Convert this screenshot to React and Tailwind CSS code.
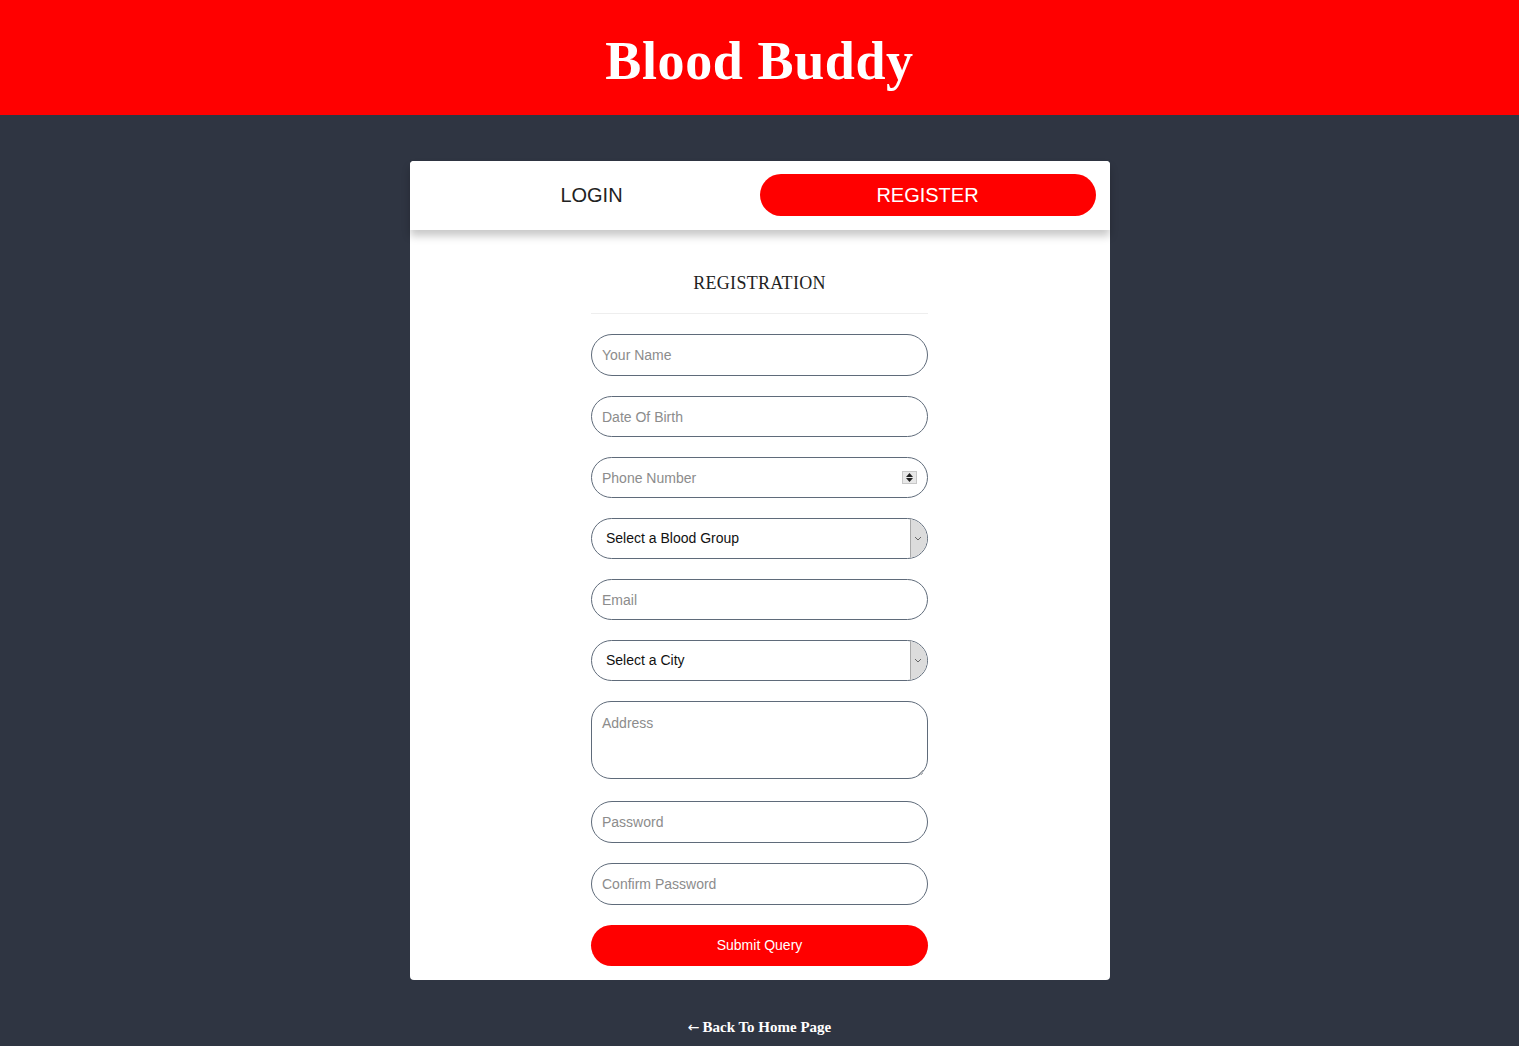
import React from "react";

const inputCls =
  "block w-full rounded-full border border-[#5f6b7a] bg-white px-[10px] text-[14px] text-[#333] placeholder:text-[#8c8c8c] outline-none";

function SelectBox({ label }) {
  return (
    <div className="flex h-[41px] w-full items-stretch overflow-hidden rounded-full border border-[#5f6b7a] bg-white">
      <div className="flex flex-1 items-center pl-[14px] text-[14px] text-[#111]">{label}</div>
      <div className="flex w-[17px] items-center justify-center border-l border-[#a9a9a9] bg-[#dcdcdc]">
        <svg width="8" height="5" viewBox="0 0 8 5" className="mr-[2px]">
          <path d="M1 1 L4 4 L7 1" fill="none" stroke="#666" strokeWidth="1" />
        </svg>
      </div>
    </div>
  );
}

export default function App() {
  return (
    <div
      className="min-h-[1046px] bg-[#2f3542]"
      style={{ fontFamily: '"Liberation Sans", Arial, sans-serif' }}
    >
      <header className="flex h-[115px] items-center justify-center bg-[#ff0000] pt-[6px]">
        <h1 className="font-['Liberation_Serif',serif] text-[54px] font-bold leading-none text-white tracking-[0.6px]">
          Blood Buddy
        </h1>
      </header>

      <main className="pt-[46px]">
        <div className="mx-auto w-[700px] rounded-[4px] bg-white">
          <div className="relative flex h-[69px] items-center rounded-t-[4px] bg-white pb-[2px] pr-[14px] shadow-[0_6px_8px_rgba(0,0,0,0.22)]">
            <div className="flex flex-1 items-center justify-center pl-[14px] text-[20px] text-[#222]">LOGIN</div>
            <div className="flex h-[42px] w-[336px] items-center justify-center rounded-full bg-[#ff0000] text-[20px] text-white">
              REGISTER
            </div>
          </div>

          <div className="mx-auto w-[337px] pb-[14px] pt-[40px]">
            <h2 className="text-center font-['Liberation_Serif',serif] text-[18px] leading-[26px] tracking-[0.3px] text-[#222]">
              REGISTRATION
            </h2>
            <div className="mt-[17px] h-px w-full bg-[#eeeeee]" />

            <div className="mt-[20px] flex flex-col gap-[20px]">
              <input className={`${inputCls} h-[42px]`} placeholder="Your Name" />
              <input className={`${inputCls} h-[41px]`} placeholder="Date Of Birth" />
              <div className="relative">
                <input className={`${inputCls} h-[41px]`} placeholder="Phone Number" />
                <div className="absolute right-[11px] top-[14px] flex h-[13px] w-[15px] flex-col items-center justify-center gap-[1px] border border-[#c8c8c8] bg-[#e8e8e8]">
                  <svg width="7" height="4" viewBox="0 0 7 4"><path d="M0 4 L3.5 0 L7 4 Z" fill="#222" /></svg>
                  <svg width="7" height="4" viewBox="0 0 7 4"><path d="M0 0 L3.5 4 L7 0 Z" fill="#222" /></svg>
                </div>
              </div>
              <SelectBox label="Select a Blood Group" />
              <input className={`${inputCls} h-[41px]`} placeholder="Email" />
              <SelectBox label="Select a City" />
              <div className="relative">
                <textarea
                  className="block h-[78px] w-full resize-none rounded-[20px] border border-[#5f6b7a] bg-white px-[10px] pt-[11px] text-[14px] text-[#333] placeholder:text-[#8c8c8c] outline-none"
                  placeholder="Address"
                />
                <svg className="absolute bottom-[3px] right-[4px]" width="7" height="7" viewBox="0 0 7 7">
                  <path d="M6 1 L1 6 M6 4 L4 6" stroke="#aaa" strokeWidth="1" />
                </svg>
              </div>
              <input className={`${inputCls} mt-[2px] h-[42px]`} placeholder="Password" />
              <input className={`${inputCls} h-[42px]`} placeholder="Confirm Password" />
              <button className="h-[41px] w-full rounded-full bg-[#ff0000] text-[14px] text-white">
                Submit Query
              </button>
            </div>
          </div>
        </div>

        <div className="flex h-[95px] items-center justify-center">
          <a className="flex items-center font-['Liberation_Serif',serif] text-[15px] font-bold text-white">
            <span className="mr-[3px] font-['DejaVu_Sans',sans-serif] text-[14px] font-normal">←</span>
            Back To Home Page
          </a>
        </div>
      </main>
    </div>
  );
}
